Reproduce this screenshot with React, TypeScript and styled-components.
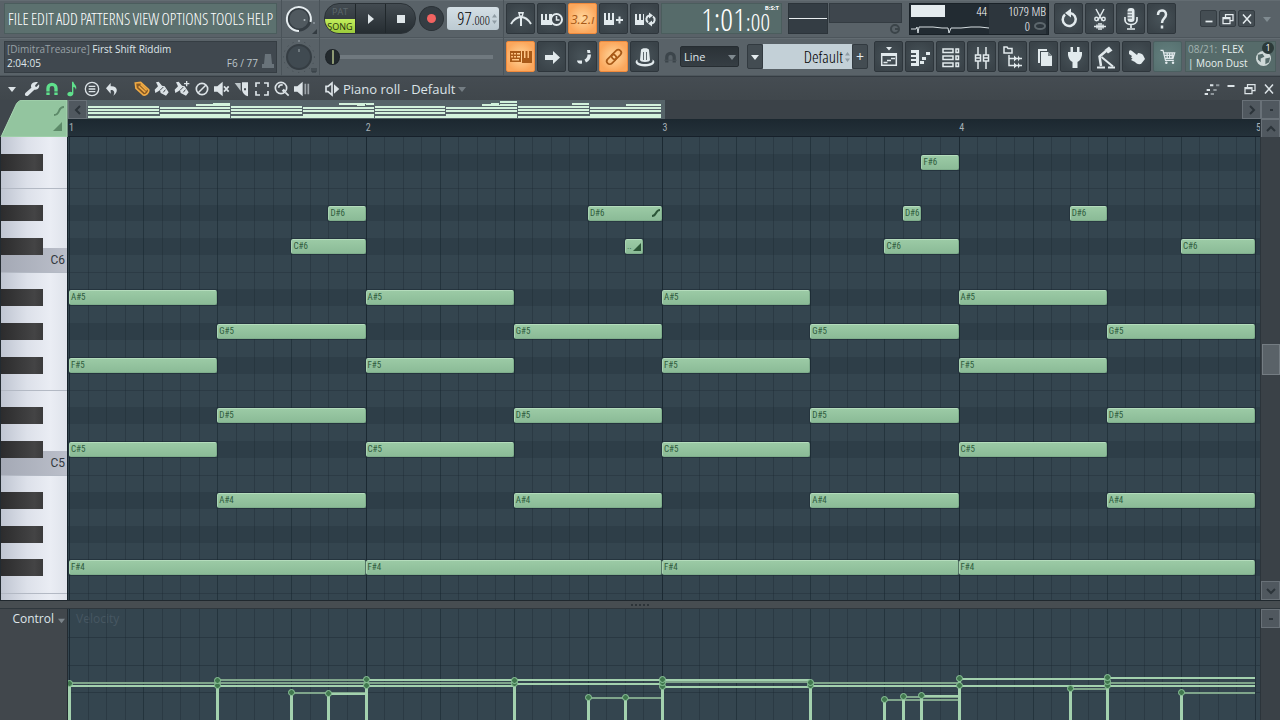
import React from "react";
import styled, { createGlobalStyle, css } from "styled-components";

const ui = `"Open Sans", "Noto Sans", sans-serif`;
const narrow = `"Open Sans Condensed Light", "Roboto Condensed", "Liberation Sans", sans-serif`;
const label = `"Roboto Condensed", "Roboto", sans-serif`;

const Global = createGlobalStyle`
  *, *::before, *::after { box-sizing: border-box; }
  body { margin: 0; background: #41484d; font-family: ${ui}; color: #dfe6ea; }
  button, select, input { font: inherit; color: inherit; margin: 0; padding: 0; border: 0; background: none; }
  svg { display: block; flex: none; }
`;

/* ---------- icons ---------- */

type IconProps = { size?: number; children: React.ReactNode; w?: number };
const Icon = ({ size = 24, w = 2, children }: IconProps) => (
  <svg width={size} height={size} viewBox="0 0 24 24" fill="none" stroke="currentColor" strokeWidth={w} aria-hidden="true">
    {children}
  </svg>
);
const Solid = ({ size = 24, children }: IconProps) => (
  <svg width={size} height={size} viewBox="0 0 24 24" fill="currentColor" aria-hidden="true">
    {children}
  </svg>
);
const Caret = ({ size = 8 }: { size?: number }) => (
  <svg width={size} height={size} viewBox="0 0 8 8" fill="currentColor" aria-hidden="true">
    <path d="M0 2h8L4 7z" />
  </svg>
);
const Spinner = () => (
  <svg width="5" height="10" viewBox="0 0 5 10" fill="#8f9ca4" aria-hidden="true">
    <path d="M0 3.500L2.500 0 5 3.500zM0 6.500h5L2.500 10z" />
  </svg>
);

const icons = {
  metronome: (
    <Icon w={2}>
      <path d="M2 17C5 12 8 10 12 10S19 12 22 17" />
      <path stroke="none" fill="currentColor" d="M9 5h6l-1 4-2 3-2-3zM11 11h2v8h-2z" />
      <circle cx="12" cy="7.500" r="1" fill="#3d464c" stroke="none" />
    </Icon>
  ),
  keysClock: (
    <Icon w={2}>
      <path stroke="none" fill="currentColor" d="M1 7h2v6h2V7h2v6h2V7h3v11H1z" />
      <circle cx="16.500" cy="12.500" r="5.500" fill="#3d464c" />
      <path d="M16.500 9v4h3" strokeWidth="1.500" />
    </Icon>
  ),
  keysPlus: (
    <Icon w={2}>
      <path stroke="none" fill="currentColor" d="M2 6h2v7h2V6h2v7h2V6h2v12H2z" />
      <path d="M14 13h7M17.500 9.500v7" />
    </Icon>
  ),
  keysLoop: (
    <Icon w={2}>
      <path stroke="none" fill="currentColor" d="M2 7h2v6h2V7h2v6h2V7h1v11H2z" />
      <path d="M15 15.500a4 4 0 0 1 1-7M20 9.500a4 4 0 0 1-1 7" />
      <path stroke="none" fill="currentColor" d="M16 5.500l4 3-4 3zM19 13.500l-4 3 4 3z" />
    </Icon>
  ),
  typing: (
    <Solid>
      <path fillRule="evenodd" d="M1 6h11v11H1zM2 8v1.500h2V8zm3 0v1.500h2V8zm3 0v1.500h3V8zM2 11v1.500h2V11zm3 0v1.500h2V11zm3 0v1.500h3V11zM3 14v1.500h7V14z" />
      <path d="M13 6h2v7h1.500V6h2v7H20V6h3v12H13z" />
    </Solid>
  ),
  arrow: <Solid><path d="M5 10h8V6l7 6.500L13 19v-4H5z" /></Solid>,
  glide: (
    <Solid>
      <path d="M16 5h3l.5 3h-3zM16.500 9.500H20c0 4-2 6.500-5 8l-1.500-3c2-1 3-2.500 3-5zM6 15.500h5v3C9 19.500 6 18 6 15.500z" />
    </Solid>
  ),
  link: (
    <Icon w={1.700}>
      <g transform="rotate(-45 12 12)">
        <rect x="3" y="9" width="11" height="6" rx="3" />
        <rect x="10" y="9" width="11" height="6" rx="3" />
      </g>
    </Icon>
  ),
  hat: (
    <Solid>
      <path d="M8 5C8 2.500 16 2.500 16 5l1 10c0 2.500-10 2.500-10 0z" />
      <path d="M4.500 14.500C0 17 4 21.500 12 21.500s12-4.500 7.500-7c1 3-2.500 4.500-7.500 4.500s-8.500-1.500-7.500-4.500z" />
      <path stroke="#5d676d" strokeWidth="1" d="M10.500 7v8M13.500 7v8" />
    </Solid>
  ),
  magnet: (
    <svg width="13" height="14" viewBox="0 0 14 14" fill="none" stroke="currentColor" strokeWidth="3.500" aria-hidden="true">
      <path d="M3 13V7a4 4 0 0 1 8 0v6" />
      <path d="M0 10.500h14" stroke="#4b545a" strokeWidth="1" />
    </svg>
  ),
  playlist: (
    <Icon w={1.500}>
      <path stroke="none" fill="currentColor" d="M9 2h6l-3 3.500zM4 8h16v3H4z" />
      <path d="M4.700 8v12.300h14.600V8M6.500 17.500h4M10 15.500h4M14 13.500h4" />
    </Icon>
  ),
  pianoRoll: (
    <Solid><path d="M3 5h8v16H3v-3h5v-2H3v-2h5v-2H3v-2h5V8H3zM12 16h4v3h-4zM14 12h4v3h-4zM18 7h4v3h-4z" /></Solid>
  ),
  rack: (
    <Icon w={1.500}>
      <path d="M4 4h10v3.500H4zM4 11h10v3.500H4zM4 18h10v3.500H4zM17 4h2.500v3.500H17zM17 11h2.500v3.500H17zM17 18h2.500v3.500H17z" />
    </Icon>
  ),
  mixer: (
    <Icon w={1.500}>
      <path d="M8 2v22M16 2v22" />
      <path d="M5.500 10h5v6h-5zM13.500 10h5v6h-5z" fill="#3d464c" />
      <path d="M5.500 13h5M13.500 13h5" />
    </Icon>
  ),
  browser: (
    <Icon w={1.500}>
      <path d="M3 2h3l1 1.500h4V8H3zM8 10v10.500h4M8 13.500h4" />
      <path d="M12 13.500h9M12 20.500h9" />
      <path stroke="none" fill="currentColor" d="M13 10.500l3 3-3 3zM17 10.500l2 3-2 3zM13 17.500l3 3-3 3zM17 17.500l2 3-2 3z" />
    </Icon>
  ),
  files: <Solid><path d="M6 4h9v2H8v12H6z" /><path d="M9 7h7l4 4v10H9z" /><path d="M16 7v4h4z" fill="#7d878c" /></Solid>,
  plug: <Solid><path d="M7.500 2H10v5h4V2h2.500v5H19v3c-1 5-3 6-4.500 7v6h-5v-6C8 16 6 15 5 10V7h2.500z" /></Solid>,
  tool: (
    <Icon w={2}>
      <path d="M12 6l-6.500 5.500L7 21" strokeWidth="2.500" />
      <path d="M7.500 12L19 21.500" />
      <path d="M3 22.500h8M14 22.500h7" />
      <path stroke="none" fill="currentColor" d="M10.500 5L15 1.500l3.500 4L14 8.500z" />
    </Icon>
  ),
  hand: <Solid><path d="M4 7c0-2 2-2 3-1l5 4 1-2c3 0 4 1 5 2l2 4-4 5c-3 .5-5-.5-6-2l-4-2 1.500-1.500L6 12.500l1-1.500-3-2z" /></Solid>,
  cart: (
    <Icon w={1.500} size={20}>
      <path d="M3 4h3l3 12h10M7 7h13l-2 6.500H8.500M7 10h12M11 7v6M14 7v6M17 7v6" />
      <circle cx="10" cy="19" r="1.500" fill="currentColor" stroke="none" />
      <circle cx="18" cy="19" r="1.500" fill="currentColor" stroke="none" />
    </Icon>
  ),
  undoLoop: (
    <Icon w={2.500}>
      <path d="M8 7.500A6.500 6.500 0 1 0 13 6" />
      <path stroke="none" fill="currentColor" d="M14 1.500v9L8 6z" />
    </Icon>
  ),
  cut: (
    <Icon w={1.500}>
      <path d="M8 2l6.500 12M16 2L9.500 14" />
      <circle cx="8.500" cy="12" r="1.700" /><circle cx="15.500" cy="12" r="1.700" />
      <path d="M6 19.500h12M9 17.500v4M11 16v7M13 16v7M15 17.500v4" />
    </Icon>
  ),
  mic: (
    <Icon w={1.700}>
      <rect x="8.500" y="1" width="7" height="14" rx="3" fill="currentColor" stroke="none" />
      <path d="M6 10v3c0 6 12 6 12 0v-3M12 17v4M8 22h8" />
      <path d="M8 5h5M8 8h5M8 11h5" stroke="#4b555b" strokeWidth="1" />
    </Icon>
  ),
  help: <Icon w={2.500}><path d="M8 8c0-6 8-6 8-.5 0 4-4 4-4 8.500M12 18.500v3" /></Icon>,
};

const small = {
  wrench: <Solid size={16}><path d="M21 2l-4 4-.5 2 2 1 4-4c1.500 5-2 9-7 8L6 22c-3 2-6-1-4-4l9-8c-2-5 3-10 10-8z" /></Solid>,
  magnet: (
    <Icon size={16} w={5}><path d="M6 21V11a6 6 0 0 1 12 0v10" /><path d="M1 16.500h22" stroke="#434a50" strokeWidth="1.500" /></Icon>
  ),
  note: <Solid size={16}><path d="M12 1h2c1 5 6 5 4 12-1-3-2-4-4-4v10c-1 5-9 5-9 1 0-3 4-5 7-3z" /></Solid>,
  list: <Icon size={16}><circle cx="12" cy="12" r="10" /><path d="M7 8h10M7 12h10M7 16h10" /></Icon>,
  undo: <Solid size={16}><path d="M10 3v5c11-1 12 9 4 14 3-5 1-9-4-8.500V19L3 11z" /></Solid>,
  pencil: (
    <Icon size={16} w={2.500}><path d="M2 3l8-1 12 11c1 4-4 9-8 8L3 11z" fill="#8a5a22" /><path d="M7 8l10 9M10 5l9 9" /></Icon>
  ),
  brush: <Solid size={16}><path d="M3 2l4-1 5 6 4 1 6 9-4 5-8-4-1-4-7 4-1-5 5-5z" /><path stroke="#434a50" strokeWidth="1.500" d="M9 14l5-5M14 17l3-4" /></Solid>,
  brushPlus: <Solid size={16}><path d="M3 2l4-1 5 6 4 1 6 9-4 5-8-4-1-4-7 4-1-5 5-5zM18 0h2v3h3v2h-3v3h-2V5h-3V3h3z" /><path stroke="#434a50" strokeWidth="1.500" d="M9 14l5-5M14 17l3-4" /></Solid>,
  ban: <Icon size={16} w={2.500}><circle cx="12" cy="12" r="8.500" /><path d="M6 18L18 6" /></Icon>,
  mute: <Icon size={16} w={2.500}><path fill="currentColor" stroke="none" d="M0 8h5l8-7v22l-8-7H0z" /><path d="M15 8l7 8M22 8l-7 8" /></Icon>,
  slice: <Solid size={16}><path d="M1 3h9v12z" opacity=".8" /><path fillRule="evenodd" d="M12 2h9v21c-5-1-8-5-9-9zM15 11v3h3v-3z" /></Solid>,
  select: <Icon size={16} w={2.500}><path d="M3 9V3h6M15 3h6v6M21 15v6h-6M9 21H3v-6" /></Icon>,
  zoom: <Icon size={16} w={2.500}><circle cx="10.500" cy="10.500" r="8.500" /><path d="M7 10a4 4 0 0 1 6-3.500M17 17l5 5" /><path d="M13 16l3-3" strokeWidth="4" /></Icon>,
  play: <Icon size={16} w={2.500}><path fill="currentColor" stroke="none" d="M0 8h5l8-7v22l-8-7H0z" /><path d="M17 4v16M21.500 4v16" opacity=".6" /></Icon>,
  speaker: <Icon size={16} w={2.500}><path d="M3 8h3l6-5v18l-6-5H3z" /><path fill="currentColor" stroke="none" d="M15 5l8 7-8 7z" /></Icon>,
  steps: <Solid size={16}><path d="M1 18h5v3H1zM4 12h5v3H4zM9 5h5v3H9z" /><path opacity=".5" d="M10 18h5v3h-5zM14 12h5v3h-5zM18 5h5v3h-5z" /></Solid>,
  min: <Icon size={12} w={3.500}><path d="M5 17h14" /></Icon>,
  minHigh: <Icon size={12} w={4}><path d="M5 6h14" /></Icon>,
  restore: <Icon size={12} w={2.500}><path d="M2 9h14v12H2zM2 11h14M7 8V3h15v12h-5" /></Icon>,
  close: <Icon size={12} w={3}><path d="M4 3l16 18M20 3L4 21" /></Icon>,
};

/* ---------- header ---------- */

const Page = styled.div`
  display: flex;
  flex-direction: column;
  min-height: 100vh;
  background: #41484d;
`;
const Header = styled.header`
  display: grid;
  grid-template-columns: 282px 38px 184px 1fr;
  grid-template-rows: 38px 38px;
  background: #596268;
  border-bottom: 1px solid #353c42;
`;
const Cell = styled.div<{ $gap?: number; $pad?: string }>`
  display: flex;
  align-items: center;
  gap: ${(p) => p.$gap ?? 0}px;
  padding: ${(p) => p.$pad ?? "0"};
  min-width: 0;
  border-right: 1px solid #4a5359;
  border-bottom: 1px solid #4d565c;
  box-shadow: inset 0 1px 0 #636c72;
`;
const Menu = styled.nav`
  flex: 1;
  display: flex;
  align-items: center;
  justify-content: space-between;
  height: 31px;
  padding: 0 3px;
  background: #5c716f;
  border: 1px solid #4b5d5d;
  font: 16px/20px ${narrow};
  color: #fff;
  button { cursor: pointer; white-space: nowrap; }
`;
const Hint = styled.section`
  flex: 1;
  height: 32px;
  padding: 0 2px;
  background: #40484f;
  border: 1px solid #353d43;
  font-size: 10px;
  line-height: 14px;
`;
const HintLine = styled.div`
  display: flex;
  justify-content: space-between;
  white-space: pre;
  i { font-style: normal; color: #98a1a6; }
  span + span { padding-right: 16px; color: #bcc5ca; }
`;
const HintWrap = styled.div`
  position: relative;
  flex: 1;
  display: flex;
  color: #dfe6ea;
  > svg { position: absolute; right: 3px; bottom: 4px; color: #69737a; }
`;
const Tool = styled.button<{ $on?: boolean; $teal?: boolean }>`
  flex: none;
  width: 29px;
  height: 31px;
  display: grid;
  place-items: center;
  border: 1px solid #2e363c;
  border-radius: 2px;
  color: #e2eaed;
  background: radial-gradient(circle, #485359 0%, #3a4349 80%);
  cursor: pointer;
  ${(p) => p.$teal && css`background: radial-gradient(circle, #64807f, #56706f); border-color: #4b6061;`}
  ${(p) => p.$on && css`background: radial-gradient(circle, #ffd9a0 0%, #fba75c 75%); border-color: #f08a3c; color: #a85a18;`}
`;
const Count = styled.span`
  font: italic 13px/16px ${ui};
`;
const Tools = styled.div`
  display: flex;
  gap: 2px;
`;
const Pill = styled.div`
  display: grid;
  grid-template-columns: 30px 30px 31px;
  height: 31px;
  border-radius: 15px;
  overflow: hidden;
  background: linear-gradient(#434b51, #262d32);
  border: 1px solid #2b3237;
  > button { display: grid; place-items: center; border-left: 1px solid #20272b; color: #dfe6e9; cursor: pointer; }
`;
const Mode = styled.div`
  display: grid;
  grid-template-rows: 15px 1fr;
`;
const ModeButton = styled.button<{ $on?: boolean }>`
  font-size: 9px;
  line-height: 13px;
  color: ${(p) => (p.$on ? "#26300c" : "#5d676c")};
  background: ${(p) => (p.$on ? "linear-gradient(#c3ee5c, #9ccb3c)" : "none")};
`;
const Record = styled.button`
  width: 25px;
  height: 25px;
  border-radius: 50%;
  background: #353d43;
  border: 1px solid #2b3237;
  display: grid;
  place-items: center;
  &::after { content: ""; width: 9px; height: 9px; border-radius: 50%; background: #f26361; }
`;
const Tempo = styled.button`
  display: flex;
  align-items: center;
  justify-content: flex-end;
  gap: 2px;
  width: 52px;
  height: 23px;
  padding: 0 2px 0 0;
  border-radius: 3px;
  background: linear-gradient(#d5e0e6, #bccad2);
  color: #000;
  font: 18px/22px ${narrow};
  small { font-size: 13px; }
`;
const Position = styled.input`
  flex: 1;
  width: 100%;
  height: 18px;
  appearance: none;
  &::-webkit-slider-runnable-track { height: 4px; background: #70797f; }
  &::-webkit-slider-thumb {
    appearance: none; width: 15px; height: 16px; margin-top: -6px; border-radius: 50%;
    background: linear-gradient(90deg, #232a2e 6px, #8e9a74 6px, #8e9a74 8px, #232a2e 8px);
    border: 1px solid #1d2327;
  }
`;
const Right = styled(Cell)`
  padding: 0 4px 0 2px;
  border-right: 0;
`;
const Clock = styled.div`
  position: relative;
  display: flex;
  align-items: baseline;
  justify-content: flex-end;
  width: 121px;
  height: 31px;
  margin-left: 2px;
  padding-right: 11px;
  background: #566b6a;
  border: 1px solid #4b5d5d;
  color: #fff;
  font: 32px/29px ${narrow};
  small { font-size: 24px; }
  sup { position: absolute; top: 1px; right: 2px; font: 700 6px/7px ${ui}; }
`;
const Scope = styled.div`
  width: 40px;
  height: 31px;
  margin-left: 6px;
  display: grid;
  align-items: center;
  background: #343d44;
  border: 1px solid #2c343a;
  &::after { content: ""; height: 1px; background: #e8eef0; }
`;
const Meter = styled.div`
  width: 73px;
  height: 31px;
  margin: 0 4px 0 1px;
  display: flex;
  flex-direction: column;
  align-items: flex-end;
  gap: 1px;
  &::before { content: ""; align-self: stretch; height: 21px; background: #3e464d; border: 1px solid #343c42; }
  svg { color: #3b4449; margin-right: 2px; }
`;
const Cpu = styled.div`
  display: grid;
  grid-template-columns: 78px 1fr;
  grid-template-rows: 15px 15px;
  width: 140px;
  height: 32px;
  margin: 0 5px 0 3px;
  padding: 0 2px 0 1px;
  background: #222b32;
  border: 1px solid #1a2228;
  color: #fff;
  font: 13px/15px ${narrow};
  text-align: right;
  > span:nth-child(2) { background: #2d363d; }
  > span:nth-child(4) { background: #2d363d; display: flex; justify-content: flex-end; align-items: center; gap: 4px; }
`;
const Load = styled.span`
  display: flex;
  justify-content: space-between;
  padding-right: 2px;
  &::before { content: ""; width: 34px; height: 12px; margin-top: 1px; background: #e4ebee; }
`;
const WinButtons = styled.div`
  display: flex;
  align-items: center;
  gap: 2px;
  margin-left: auto;
  color: #808b91;
`;
const WinButton = styled.button`
  width: 17px;
  height: 17px;
  display: grid;
  place-items: center;
  color: #e5ecef;
  background: #444d53;
  border: 1px solid #343c42;
  border-radius: 2px;
`;
const Tail = styled.span`
  width: 19px;
  display: grid;
  place-items: center;
`;
const SelectWrap = styled.label`
  position: relative;
  display: flex;
  align-items: center;
  gap: 3px;
  margin-left: 5px;
  color: #3c454b;
  svg:last-child { position: absolute; right: 3px; color: #808a90; }
`;
const Select = styled.select`
  width: 59px;
  height: 21px;
  padding-left: 3px;
  appearance: none;
  background: linear-gradient(#2b3237, #363e44);
  border: 1px solid #262d32;
  border-radius: 2px;
  font-size: 11px;
  color: #dfe6ea;
`;
const Pattern = styled.div`
  display: flex;
  margin: 0 6px 0 8px;
`;
const PatternSide = styled.button`
  width: 16px;
  height: 25px;
  display: grid;
  place-items: center;
  background: #434c52;
  border: 1px solid #323a40;
  border-radius: 2px;
  color: #e5ecef;
  font-size: 14px;
  line-height: 20px;
`;
const PatternName = styled.button`
  display: flex;
  align-items: center;
  justify-content: flex-end;
  gap: 2px;
  width: 89px;
  height: 25px;
  padding-right: 2px;
  background: #c3d0d7;
  color: #000;
  font: 17px/24px ${narrow};
`;
const News = styled.a`
  position: relative;
  flex: 1;
  height: 31px;
  margin-left: 3px;
  padding: 0 2px;
  background: #566b6a;
  border: 1px solid #4b5d5d;
  color: #e7f0ef;
  text-decoration: none;
  font-size: 10px;
  line-height: 14px;
  white-space: nowrap;
  i { font-style: normal; color: #a3b3b1; margin-right: 2px; }
  svg { position: absolute; right: 4px; bottom: 5px; }
`;
const Badge = styled.b`
  position: absolute;
  right: 1px;
  top: 0;
  width: 12px;
  height: 12px;
  border-radius: 50%;
  background: #2c3a39;
  color: #fff;
  font-size: 9px;
  font-weight: 400;
  line-height: 12px;
  text-align: center;
`;

const Knob = ({ ring }: { ring?: boolean }) => (
  <svg width="36" height="36" viewBox="0 0 36 36" fill="none" aria-hidden="true">
    <circle cx="17" cy="18" r={ring ? 11 : 12} fill={ring ? "#50595f" : "#404a51"} stroke="#353d43" strokeWidth={ring ? 3 : 2} />
    {ring ? (
      <>
        <path d="M17 30A12 12 0 1 1 28.500 21" stroke="#e6edf0" strokeWidth="2" />
        <circle cx="22.500" cy="19" r="1" fill="#aeb8bd" />
        <path d="M35 28v5h-5z" fill="#333b41" />
        <circle cx="32" cy="22" r="1" fill="#8c969c" />
      </>
    ) : (
      <>
        <circle cx="17" cy="18" r="15.500" stroke="#434c52" strokeDasharray="1 5" />
        <path d="M17 10v3" stroke="#9ba5aa" />
        <circle cx="17" cy="2" r="1" fill="#8c969c" />
        <path d="M30 29v4h4v-4M32 29v4" stroke="#333b41" />
      </>
    )}
  </svg>
);

const menus = ["FILE", "EDIT", "ADD", "PATTERNS", "VIEW", "OPTIONS", "TOOLS", "HELP"];

const TopBar = () => (
  <Header>
    <Cell $pad="0 4px">
      <Menu>{menus.map((m) => <button key={m}>{m}</button>)}</Menu>
    </Cell>
    <Cell><Knob ring /></Cell>
    <Cell $pad="0 4px" $gap={3}>
      <Pill>
        <Mode>
          <ModeButton>PAT</ModeButton>
          <ModeButton $on>SONG</ModeButton>
        </Mode>
        <button aria-label="Play"><svg width="8" height="10"><path d="M1 0l6 5-6 5z" fill="currentColor" /></svg></button>
        <button aria-label="Stop"><svg width="8" height="8"><path d="M0 0h8v8H0z" fill="currentColor" /></svg></button>
      </Pill>
      <Record aria-label="Record" />
      <Tempo><span>97<small>.000</small></span><Spinner /></Tempo>
    </Cell>
    <Right>
      <Tools>
        <Tool aria-label="Metronome">{icons.metronome}</Tool>
        <Tool aria-label="Wait for input">{icons.keysClock}</Tool>
        <Tool aria-label="Countdown" $on><Count>3.2.ı</Count></Tool>
        <Tool aria-label="Blend recording">{icons.keysPlus}</Tool>
        <Tool aria-label="Loop recording">{icons.keysLoop}</Tool>
      </Tools>
      <Clock>1:01<small>:00</small><sup>B:S:T</sup></Clock>
      <Scope />
      <Meter>
        <svg width="10" height="10" viewBox="0 0 10 10" fill="none" stroke="currentColor" strokeWidth="2"><circle cx="5" cy="5" r="4" /><path d="M5 5h4" /></svg>
      </Meter>
      <Cpu>
        <Load>44</Load>
        <span>1079 MB</span>
        <svg width="78" height="14" viewBox="0 0 78 14" fill="none" stroke="#d5dde0">
          <path d="M0 10h5l1-2 1 6 1-6h14l9 1h6l1 5 2-5h10l10-1h9l9 1h4V7" />
        </svg>
        <span>0 <svg width="12" height="8" viewBox="0 0 12 8" fill="none" stroke="#5d676d" strokeWidth="2"><ellipse cx="6" cy="4" rx="5" ry="3" /></svg></span>
      </Cpu>
      <Tools>
        <Tool aria-label="Undo history">{icons.undoLoop}</Tool>
        <Tool aria-label="Edit audio">{icons.cut}</Tool>
        <Tool aria-label="Record audio">{icons.mic}</Tool>
        <Tool aria-label="Help">{icons.help}</Tool>
      </Tools>
      <WinButtons>
        <WinButton aria-label="Minimise">{small.min}</WinButton>
        <WinButton aria-label="Restore">{small.restore}</WinButton>
        <WinButton aria-label="Close">{small.close}</WinButton>
        <Tail><Caret /></Tail>
      </WinButtons>
    </Right>
    <Cell $pad="0 4px">
      <HintWrap>
        <Hint>
          <HintLine><span><i>[DimitraTreasure]</i> First Shift Riddim</span></HintLine>
          <HintLine><span>2:04:05</span><span>F6 / 77</span></HintLine>
        </Hint>
        <svg width="12" height="16" viewBox="0 0 12 16" fill="currentColor"><path d="M3 1h6l1 10H2zM0 11h12v4H0z" /></svg>
      </HintWrap>
    </Cell>
    <Cell><Knob /></Cell>
    <Cell $pad="0 10px 0 5px">
      <Position type="range" aria-label="Song position" min={0} max={100} defaultValue={0} />
    </Cell>
    <Right>
      <Tools>
        <Tool aria-label="Typing keyboard" $on>{icons.typing}</Tool>
        <Tool aria-label="Step edit">{icons.arrow}</Tool>
        <Tool aria-label="Slide">{icons.glide}</Tool>
        <Tool aria-label="Link controllers" $on>{icons.link}</Tool>
        <Tool aria-label="Multilink">{icons.hat}</Tool>
      </Tools>
      <SelectWrap>
        {icons.magnet}
        <Select aria-label="Snap" defaultValue="Line"><option>Line</option></Select>
        <Caret />
      </SelectWrap>
      <Pattern>
        <PatternSide aria-label="Pattern list"><Caret /></PatternSide>
        <PatternName>Default <Spinner /></PatternName>
        <PatternSide aria-label="New pattern">+</PatternSide>
      </Pattern>
      <Tools>
        <Tool aria-label="Playlist">{icons.playlist}</Tool>
        <Tool aria-label="Piano roll">{icons.pianoRoll}</Tool>
        <Tool aria-label="Channel rack">{icons.rack}</Tool>
        <Tool aria-label="Mixer">{icons.mixer}</Tool>
        <Tool aria-label="Browser">{icons.browser}</Tool>
        <Tool aria-label="Project">{icons.files}</Tool>
        <Tool aria-label="Plugins">{icons.plug}</Tool>
        <Tool aria-label="Tempo tapper">{icons.tool}</Tool>
        <Tool aria-label="Touch">{icons.hand}</Tool>
        <Tool aria-label="Shop" $teal>{icons.cart}</Tool>
      </Tools>
      <News href="#news">
        <i>08/21:</i> FLEX<br />| Moon Dust
        <svg width="15" height="15" viewBox="0 0 16 16">
          <circle cx="8" cy="8" r="8" fill="#cfd9d8" />
          <path d="M2 4l5-1 2 3-4 2v4l-3-3zM10 8l5-1-1 5-4 2z" fill="#566b6a" />
        </svg>
        <Badge>1</Badge>
      </News>
    </Right>
  </Header>
);

/* ---------- piano roll ---------- */

const TitleBar = styled.div`
  display: flex;
  align-items: center;
  height: 23px;
  padding: 0 2px;
  background: linear-gradient(#454c52, #40474c);
  color: #dce3e7;
`;
const IconButton = styled.button<{ $tone?: string }>`
  width: 20px;
  height: 20px;
  display: grid;
  place-items: center;
  color: ${(p) => p.$tone ?? "inherit"};
`;
const Group = styled.div<{ $end?: boolean }>`
  display: flex;
  margin-right: 10px;
  ${(p) => p.$end && css`
    margin: 0 0 0 auto;
    ${IconButton} { width: 19px; }
  `}
`;
const Title = styled.h1`
  display: flex;
  align-items: center;
  gap: 3px;
  margin: 0;
  padding-left: 1px;
  font-size: 13px;
  line-height: 20px;
  font-weight: 400;
  svg { color: #747d83; }
`;
const Roll = styled.main`
  flex: 1;
  display: grid;
  grid-template-columns: 68px 1fr 20px;
  grid-template-rows: 19px 18px minmax(300px, 1fr) 9px 111px;
`;
const Corner = styled.div`
  grid-row: 1 / 3;
  display: flex;
  background: #3f464c;
  svg { width: 100%; height: 100%; }
`;
const Overview = styled.div`
  grid-column: 2 / 4;
  display: flex;
  background: #3b4248;
`;
const ScrollButton = styled.button`
  flex: none;
  width: 19px;
  height: 19px;
  display: grid;
  place-items: center;
  color: #2c343a;
  background: #50585f;
  border: 1px solid #697178;
`;
const Track = styled.div`
  flex: 1;
  display: flex;
`;
const Viewport = styled.div`
  width: 50%;
  padding: 1px 3px 1px 1px;
  display: flex;
  background: #566469;
`;
const MiniMap = styled.div`
  position: relative;
  flex: 1;
`;
const MiniNote = styled.span`
  position: absolute;
  height: 2px;
  background: #d3f2dc;
  border-right: 1px solid #566469;
`;
const Ruler = styled.div`
  display: grid;
  grid-template-columns: repeat(4, 1fr) 4px;
  padding-left: 1px;
  background: linear-gradient(#1c2830, #24313a);
  border-bottom: 1px solid #16202a;
  font: 10px/18px ${label};
  color: #a6b0b6;
`;
const ScrollColumn = styled.div`
  display: flex;
  flex-direction: column;
  align-items: center;
  background: #3a4147;
  border-left: 1px solid #2c343a;
`;
const Thumb = styled.div`
  width: 18px;
  height: 31px;
  margin: auto 0;
  background: #5a6268;
  border: 1px solid #747c82;
`;
const Piano = styled.div`
  display: grid;
  grid-template-columns: 42px 1fr;
  grid-template-rows: repeat(27, minmax(0, 10fr)) minmax(0, 4fr);
  border-left: 1px solid #232b31;
  border-right: 1px solid #16222a;
  background: linear-gradient(90deg, #bfc5d1, #dde1ea 40%, #eaedf4 75%, #dfe3eb);
`;
const BlackKey = styled.span<{ $row: number }>`
  grid-column: 1;
  grid-row: ${(p) => p.$row + 1};
  z-index: 1;
  background: linear-gradient(90deg, #2c2c2d, #444445 80%, #3a3a3b);
`;
const KeyEdge = styled.span<{ $row: number }>`
  grid-column: 1 / 3;
  grid-row: ${(p) => p.$row + 1};
  border-top: 1px solid #b3b9c4;
`;
const CKey = styled.span<{ $row: number }>`
  grid-column: 1 / 3;
  grid-row: ${(p) => p.$row} / ${(p) => p.$row + 2};
  align-self: end;
  height: 72%;
  display: flex;
  align-items: center;
  justify-content: flex-end;
  padding-right: 2px;
  background: linear-gradient(90deg, #a4a9b5, #bbbfca);
  font: 12px/14px "Roboto", sans-serif;
  color: #33383f;
`;
const Canvas = styled.div`
  position: relative;
  display: flex;
  padding: 0 4px 0 1px;
  background: #34454f;
  overflow: hidden;
`;
const Rows = styled.div`
  position: absolute;
  inset: 0;
  display: grid;
  grid-template-rows: repeat(27, minmax(0, 10fr)) minmax(0, 4fr);
`;
const Row = styled.span<{ $dark?: boolean; $edge?: boolean }>`
  background: ${(p) => (p.$dark ? "#2e3e48" : "transparent")};
  border-top: ${(p) => (p.$edge ? "1px solid #2c3b45" : "0")};
`;
const Field = styled.div`
  position: relative;
  flex: 1;
  display: grid;
  grid-template-columns: repeat(64, 1fr);
  border-right: 1px solid #22303a;
`;
const Step = styled.span<{ $i: number }>`
  border-left: 1px solid
    ${(p) => (p.$i % 16 === 0 ? "#1b2932" : p.$i % 4 === 0 ? "rgba(24,38,47,.55)" : "rgba(24,38,47,.32)")};
`;
const NoteBar = styled.div`
  position: absolute;
  height: 15px;
  margin-top: 1px;
  display: flex;
  justify-content: space-between;
  align-items: center;
  padding: 0 1px;
  overflow: hidden;
  border: 1px solid #7fae8c;
  border-top-color: #b4dcbc;
  border-left-color: #a8d3b1;
  border-radius: 2px;
  background: linear-gradient(#9bcaa5, #8bbb97);
  box-shadow: 0 0 0 1px rgba(24, 38, 47, 0.4);
  font: 9px/13px ${label};
  color: #2f5c3d;
`;
const Splitter = styled.div`
  grid-column: 1 / 4;
  display: grid;
  place-items: center;
  background: #474d51;
  border-top: 1px solid #20282e;
  border-bottom: 1px solid #2f373d;
  color: #2c3338;
`;
const ControlLabel = styled.button`
  display: flex;
  align-items: flex-start;
  justify-content: flex-end;
  gap: 4px;
  padding: 0 2px 0 0;
  border-right: 1px solid #232b31;
  background: #41474c;
  color: #dfe5e9;
  font-size: 12px;
  line-height: 20px;
  svg { margin-top: 8px; color: #7b848a; }
`;
const Levels = styled.div`
  position: absolute;
  inset: 0;
  display: grid;
  grid-template-rows: repeat(4, 1fr);
  span + span { border-top: 1px solid #293842; }
`;
const LaneName = styled.span`
  position: absolute;
  left: 8px;
  top: 0;
  font-size: 12px;
  line-height: 20px;
  color: #475762;
`;
const Hold = styled.span<{ $soft?: boolean }>`
  position: absolute;
  height: 2px;
  margin-bottom: -1px;
  background: ${(p) => (p.$soft ? "#7fa58b" : "#a3d1ae")};
`;
const Stem = styled.span`
  position: absolute;
  bottom: 0;
  width: 3px;
  margin-left: -1px;
  background: #a3d1ae;
`;
const Head = styled.span`
  position: absolute;
  width: 7px;
  height: 7px;
  margin: 0 0 -3px -3px;
  border-radius: 50%;
  border: 1px solid #8fc79c;
  background: #41784f;
`;

const NAMES = ["C", "C#", "D", "D#", "E", "F", "F#", "G", "G#", "A", "A#", "B"];
const TOP = 6 * 12 + 7;
const ROWS = 27.4;
const STEPS = 64;
const pitchOf = (name: string) => Number(name.slice(-1)) * 12 + NAMES.indexOf(name.slice(0, -1));
const rowOf = (name: string) => TOP - pitchOf(name);
const rows = Array.from({ length: 28 }, (_, i) => NAMES[(TOP - i) % 12]);

type Note = { name: string; at: number; len: number; mark?: "slide" | "porta" };
const notes: Note[] = [
  ...[0, 16, 32, 48].flatMap((b) => [
    { name: "A#5", at: b, len: 8 },
    { name: "F#5", at: b, len: 8 },
    { name: "C#5", at: b, len: 8 },
    { name: "F#4", at: b, len: 16 },
    { name: "G#5", at: b + 8, len: 8 },
    { name: "D#5", at: b + 8, len: 8 },
    { name: "A#4", at: b + 8, len: 8 },
  ]),
  { name: "C#6", at: 12, len: 4 },
  { name: "D#6", at: 14, len: 2 },
  { name: "D#6", at: 28, len: 4, mark: "slide" },
  { name: "C#6", at: 30, len: 1, mark: "porta" },
  { name: "C#6", at: 44, len: 4 },
  { name: "D#6", at: 45, len: 1 },
  { name: "F#6", at: 46, len: 2 },
  { name: "D#6", at: 54, len: 2 },
  { name: "C#6", at: 60, len: 4 },
];

/* start step, end step, level in percent, softer line */
const holds: [number, number, number, boolean?][] = [
  [0, 8, 33, true], [0, 8, 31],
  [8, 16, 36, true], [8, 16, 33, true], [8, 16, 31],
  [12, 16, 24, true], [14, 16, 23],
  [16, 24, 36], [16, 24, 33, true], [16, 24, 31],
  [24, 32, 36], [24, 32, 32],
  [28, 32, 20, true],
  [32, 40, 36], [32, 40, 34, true], [32, 40, 30],
  [40, 48, 33, true], [40, 48, 31],
  [44, 48, 18, true], [45, 48, 21, true], [46, 48, 22],
  [48, 56, 37], [48, 56, 31],
  [54, 56, 28, true],
  [56, 64, 38], [56, 64, 33, true], [56, 64, 31],
  [60, 64, 24, true],
];
const heads: [number, number[]][] = [
  [0, [32]], [8, [31, 35]], [12, [24]], [14, [23]], [16, [31, 36]], [24, [32, 35]], [28, [20]], [30, [20]],
  [32, [30, 33, 36]], [40, [31, 33]], [44, [18]], [45, [21]], [46, [22]], [48, [31, 37]], [54, [28]],
  [56, [31, 34, 38]], [60, [24]],
];
const x = (step: number) => `${(step / STEPS) * 100}%`;

const Steps = () => <>{Array.from({ length: STEPS }, (_, i) => <Step key={i} $i={i} />)}</>;

const Chevron = ({ d }: { d: string }) => (
  <svg width="10" height="10" viewBox="0 0 10 10" fill="none" stroke="currentColor" strokeWidth="2"><path d={d} /></svg>
);

export default function App() {
  return (
    <Page>
      <Global />
      <TopBar />
      <TitleBar>
        <Group>
          <IconButton aria-label="Menu"><Caret /></IconButton>
          <IconButton aria-label="Tools">{small.wrench}</IconButton>
          <IconButton aria-label="Snap" $tone="#5fe08c">{small.magnet}</IconButton>
          <IconButton aria-label="Stamp" $tone="#5fe08c">{small.note}</IconButton>
          <IconButton aria-label="Options">{small.list}</IconButton>
          <IconButton aria-label="Undo">{small.undo}</IconButton>
        </Group>
        <Group>
          <IconButton aria-label="Draw" $tone="#f0ab45">{small.pencil}</IconButton>
          <IconButton aria-label="Paint">{small.brush}</IconButton>
          <IconButton aria-label="Paint sequence">{small.brushPlus}</IconButton>
          <IconButton aria-label="Delete">{small.ban}</IconButton>
          <IconButton aria-label="Mute">{small.mute}</IconButton>
          <IconButton aria-label="Slice">{small.slice}</IconButton>
          <IconButton aria-label="Select">{small.select}</IconButton>
          <IconButton aria-label="Zoom">{small.zoom}</IconButton>
          <IconButton aria-label="Playback">{small.play}</IconButton>
        </Group>
        <IconButton aria-label="Channel">{small.speaker}</IconButton>
        <Title>Piano roll - Default <Caret /></Title>
        <Group $end>
          <IconButton aria-label="Ghost notes">{small.steps}</IconButton>
          <IconButton aria-label="Minimise window">{small.minHigh}</IconButton>
          <IconButton aria-label="Restore window">{small.restore}</IconButton>
          <IconButton aria-label="Close window">{small.close}</IconButton>
        </Group>
      </TitleBar>
      <Roll>
        <Corner>
          <svg viewBox="0 0 68 37" fill="none">
            <path d="M1 37L15 7C17 2 19 0 24 0h43v37z" fill="#93c59f" stroke="#a9d7b3" />
            <path d="M54 15c7 0 3-8 10-8" stroke="#5d8a69" strokeWidth="2" />
            <path d="M62 22v9h-9z" fill="#5d8a69" />
          </svg>
        </Corner>
        <Overview>
          <ScrollButton aria-label="Scroll left"><Chevron d="M7 1L3 5l4 4" /></ScrollButton>
          <Track>
            <Viewport>
              <MiniMap>
                {notes.map((n, i) => (
                  <MiniNote key={i} style={{ left: x(n.at), width: x(n.len), top: `${((rowOf(n.name) - 1) / 27) * 100}%` }} />
                ))}
              </MiniMap>
            </Viewport>
          </Track>
          <ScrollButton aria-label="Scroll right"><Chevron d="M3 1l4 4-4 4" /></ScrollButton>
          <ScrollButton aria-label="Zoom to fit"><Chevron d="M4 5h3" /></ScrollButton>
        </Overview>
        <Ruler>{[1, 2, 3, 4, 5].map((n) => <span key={n}>{n}</span>)}</Ruler>
        <ScrollColumn><ScrollButton aria-label="Scroll up"><Chevron d="M1 7l4-4 4 4" /></ScrollButton></ScrollColumn>
        <Piano>
          {rows.map((n, i) => {
            if (n.includes("#")) return <BlackKey key={i} $row={i} />;
            if (n === "C") return <CKey key={i} $row={i}>C{Math.floor((TOP - i) / 12)}</CKey>;
            if (n === "E" || n === "B") return <KeyEdge key={i} $row={i} />;
            return null;
          })}
        </Piano>
        <Canvas>
          <Rows>{rows.map((n, i) => <Row key={i} $dark={n.includes("#")} $edge={n === "E" || n === "B"} />)}</Rows>
          <Field>
            <Steps />
            {notes.map((n, i) => (
              <NoteBar key={i} style={{ left: x(n.at), width: x(n.len), top: `${(rowOf(n.name) / ROWS) * 100}%` }}>
                <span>{n.mark === "porta" ? ".." : n.name}</span>
                {n.mark && (
                  <svg width="8" height="8" viewBox="0 0 8 8" fill="none">
                    {n.mark === "slide" ? <path d="M0 7c5 0 3-6 8-6" stroke="#2c5638" strokeWidth="2" /> : <path d="M8 0v8H0z" fill="#2c5638" />}
                  </svg>
                )}
              </NoteBar>
            ))}
          </Field>
        </Canvas>
        <ScrollColumn>
          <Thumb />
          <ScrollButton aria-label="Scroll down"><Chevron d="M1 3l4 4 4-4" /></ScrollButton>
        </ScrollColumn>
        <Splitter>
          <svg width="18" height="2"><path d="M0 1h18" stroke="currentColor" strokeWidth="2" strokeDasharray="2 2" /></svg>
        </Splitter>
        <ControlLabel>Control <Caret size={7} /></ControlLabel>
        <Canvas>
          <Levels><span /><span /><span /><span /></Levels>
          <LaneName>Velocity</LaneName>
          <Field>
            <Steps />
            {holds.map(([a, b, v, soft], i) => (
              <Hold key={i} $soft={soft} style={{ left: x(a), width: x(b - a), bottom: `${v}%` }} />
            ))}
            {heads.map(([at, vs]) => (
              <React.Fragment key={at}>
                <Stem style={{ left: x(at), height: `${Math.max(...vs)}%` }} />
                {vs.map((v) => <Head key={v} style={{ left: x(at), bottom: `${v}%` }} />)}
              </React.Fragment>
            ))}
          </Field>
        </Canvas>
        <ScrollColumn><ScrollButton aria-label="Lane options"><Chevron d="M3 5h4" /></ScrollButton></ScrollColumn>
      </Roll>
    </Page>
  );
}
